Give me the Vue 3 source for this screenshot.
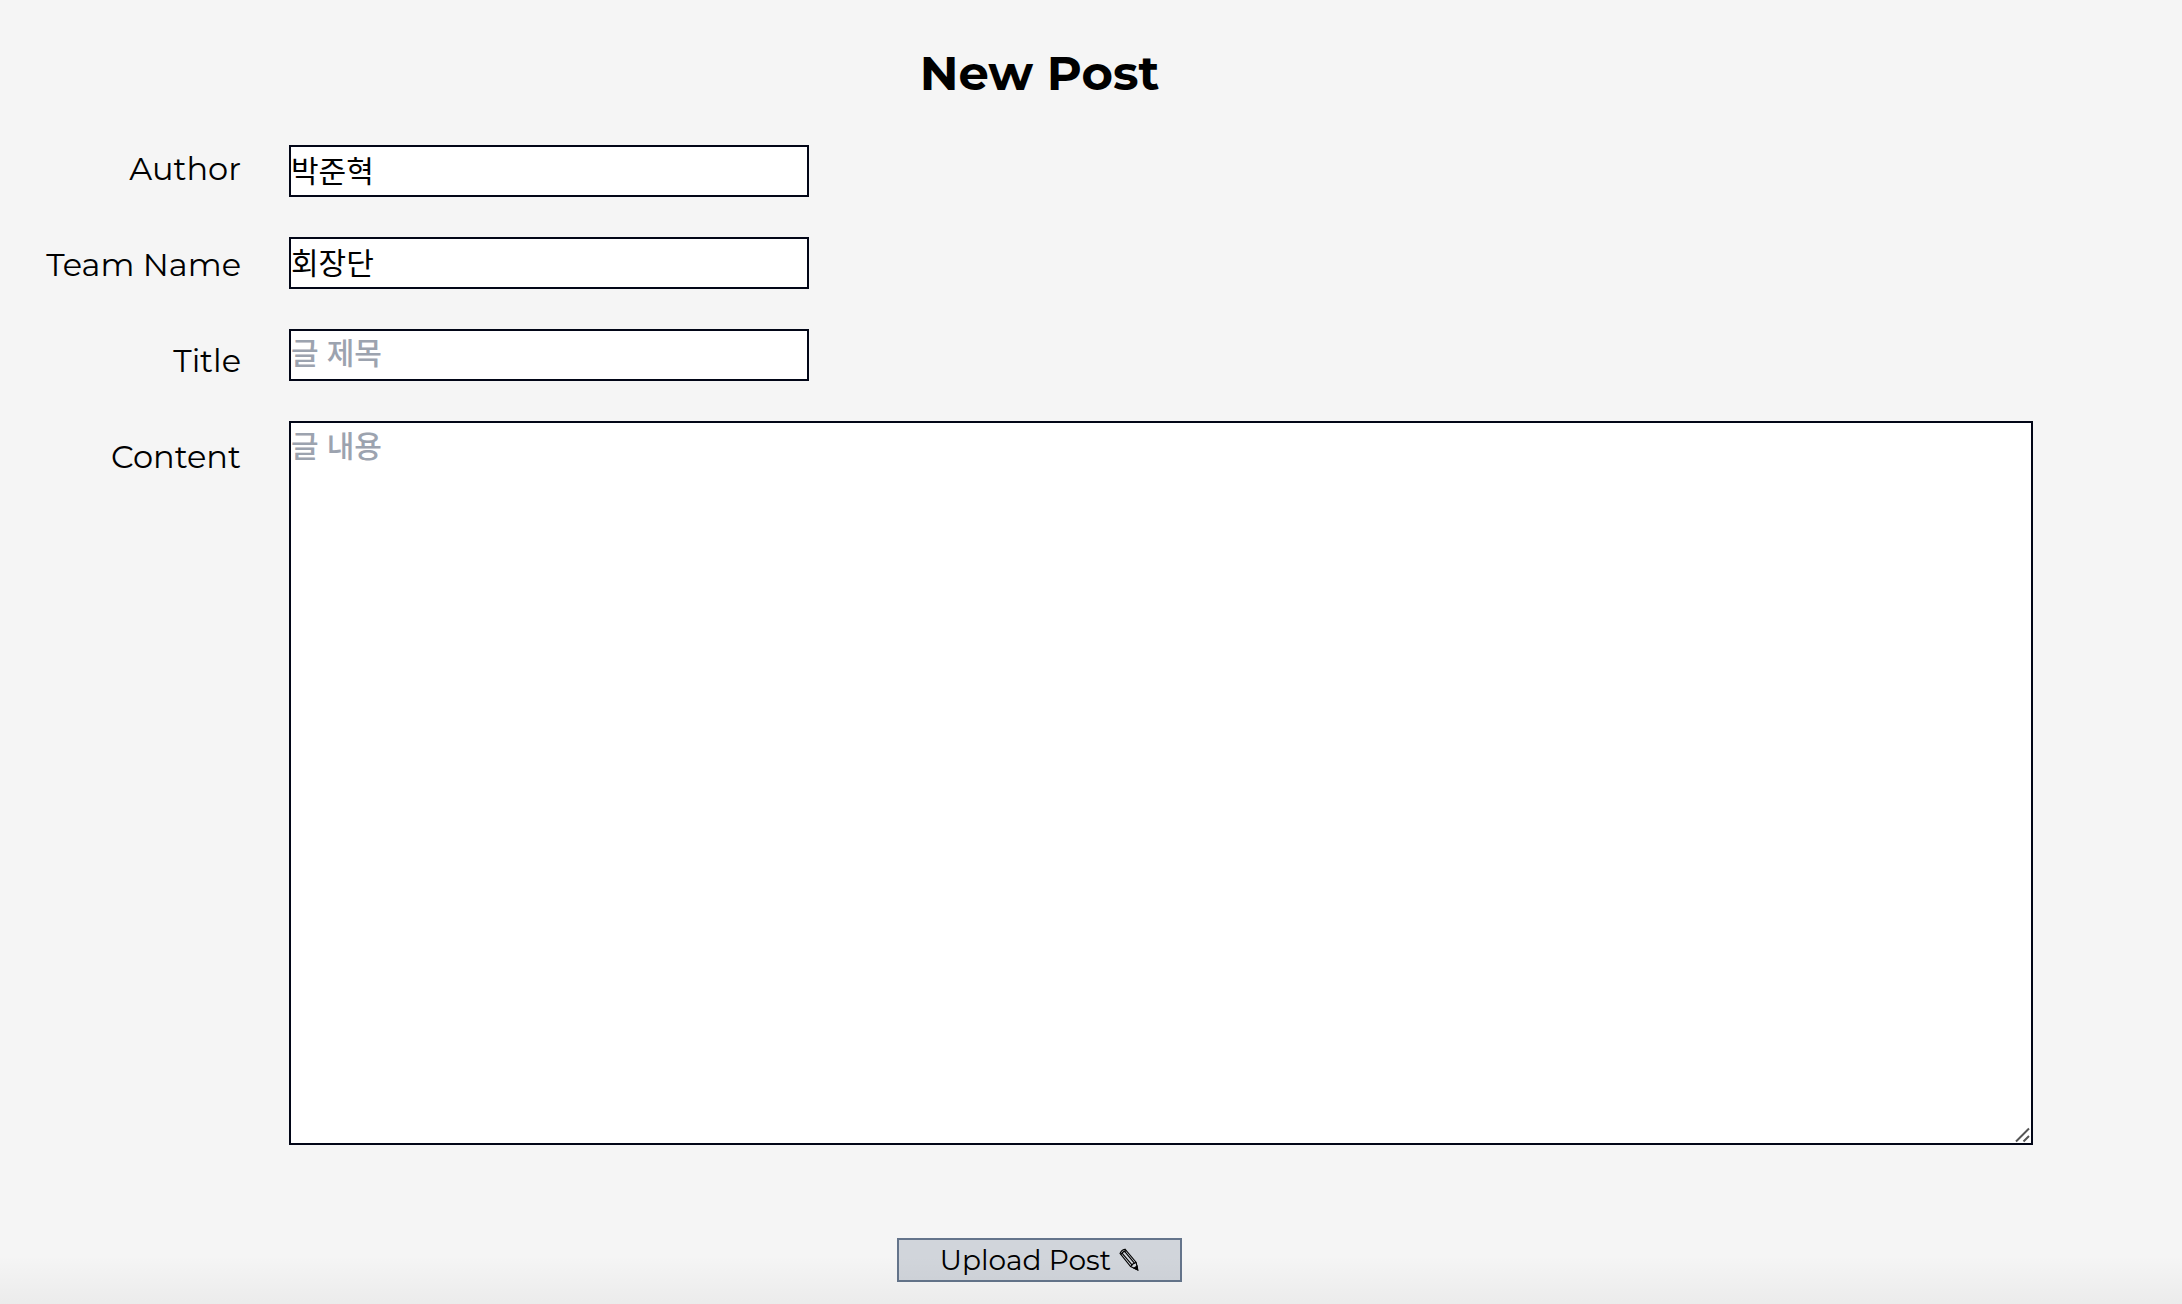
<script setup>
import { ref } from 'vue';

const author = ref('박준혁');
const teamName = ref('회장단');
const title = ref('');
const content = ref('');

const uploadPost = () => {
  console.log(author.value, teamName.value, title.value, content.value);
};
</script>

<template>
  <form class="new_post" @submit.prevent="uploadPost">
    <h1>New Post</h1>
    <div class="post_body">
      <div class="labels">
        <label for="author">Author</label>
        <label for="team">Team Name</label>
        <label for="title">Title</label>
        <label for="content">Content</label>
      </div>
      <div class="fields">
        <input id="author" v-model="author" type="text" class="field">
        <input id="team" v-model="teamName" type="text" class="field">
        <input id="title" v-model="title" type="text" class="field" placeholder="글 제목">
        <div class="content_box">
          <textarea id="content" v-model="content" class="field content_field" placeholder="글 내용"></textarea>
          <svg class="grip" viewBox="0 0 16 16" aria-hidden="true">
            <path d="M1 14.5 L14 1.5 M8.5 14.5 L14 9" />
          </svg>
        </div>
      </div>
    </div>
    <button type="submit" class="upload">
      <span>Upload Post</span>
      <svg class="pencil" viewBox="0 0 20 24" aria-hidden="true">
        <path d="M1 5.4 Q2.2 2 6 1.2 L17.2 14.4 L18.6 21.8 L11.6 18.6 Z" />
        <path d="M2.6 4.6 L13.4 17.4 M5 2.6 L15.4 15.2 M1.8 6.4 Q4 3.2 7.2 2.6" />
        <path d="M11.6 18.6 Q13.2 15.6 17.2 14.4" />
        <path class="tip" d="M18.8 22 L15 20.2 L18.1 18 Z" />
      </svg>
    </button>
  </form>
</template>

<style>
body {
  background-color: #f5f5f5;
}
</style>

<style scoped>
.new_post {
  box-sizing: border-box;
  min-height: 100vh;
  padding: 49px 149px 22px 46px;
  display: flex;
  flex-direction: column;
  align-items: center;
  color: #000;
  font-family: Montserrat, "Noto Sans CJK KR", sans-serif;
  font-size: 32px;
  position: relative;
}

/* soft shade along the bottom edge */
.new_post::after {
  content: "";
  position: absolute;
  left: 0;
  right: 0;
  bottom: 0;
  height: 48px;
  background: linear-gradient(rgba(0, 0, 0, 0), rgba(0, 0, 0, 0.04));
  pointer-events: none;
}

h1 {
  margin: 0 0 48px;
  font-size: 48px;
  line-height: 48px;
  font-weight: 700;
}

.post_body {
  width: 100%;
  display: flex;
  gap: 48px;
}

.labels {
  width: 195px;
  flex-shrink: 0;
  display: flex;
  flex-direction: column;
  gap: 48px;
  text-align: right;
  line-height: 48px;
  white-space: nowrap;
}

.fields {
  flex: 1;
  display: flex;
  flex-direction: column;
  align-items: flex-start;
  gap: 40px;
}

.field {
  box-sizing: border-box;
  width: 520px;
  height: 52px;
  margin: 0;
  padding: 0 0 4px;
  display: block;
  border: 2px solid #020617;
  border-radius: 0;
  outline: none;
  background-color: #fff;
  color: #000;
  font-family: inherit;
  font-size: 30px;
  line-height: 44px;
}

.field::placeholder {
  color: #9ca3af;
  font-weight: 500;
}

.content_box {
  width: 100%;
  position: relative;
}

.content_field {
  width: 100%;
  height: 724px;
  line-height: 48px;
  resize: vertical;
}

.content_field::-webkit-resizer {
  background-color: transparent;
}

.grip {
  position: absolute;
  right: 2px;
  bottom: 2px;
  width: 16px;
  height: 16px;
  fill: none;
  stroke: #555;
  stroke-width: 2;
  pointer-events: none;
}

.upload {
  box-sizing: border-box;
  width: 285px;
  height: 44px;
  margin-top: 93px;
  padding: 0;
  display: flex;
  justify-content: center;
  align-items: center;
  gap: 8px;
  border: 2px solid #64748b;
  border-radius: 0;
  background-color: #d1d5db;
  color: #000;
  font-family: inherit;
  font-size: 28px;
  line-height: 40px;
  cursor: pointer;
}

.upload:hover {
  background-color: #c3c8d0;
}

.pencil {
  width: 20px;
  height: 24px;
  fill: none;
  stroke: #000;
  stroke-width: 1.1;
}

.pencil .tip {
  fill: #000;
}
</style>
